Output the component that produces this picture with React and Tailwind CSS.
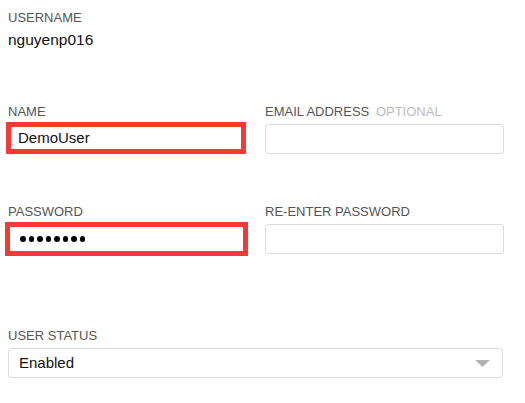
export default function App() {
  const label = "text-[13px] leading-[14px] text-[#555555] uppercase";
  const box = "h-[30px] rounded-[3px] border border-[#dcdcdc] bg-white";
  return (
    <div
      className="w-[525px] h-[403px] bg-white pl-[8px] pr-[21px] pt-[11px]"
      style={{ fontFamily: '"Liberation Sans", Arial, sans-serif' }}
    >
      <div className="flex flex-col">
        <div className={label}>Username</div>
        <div className="mt-[6px] text-[15.5px] leading-[18px] text-[#111]">nguyenp016</div>
      </div>

      <div className="mt-[56px] grid grid-cols-[238px_239px] gap-x-[19px]">
        <div className="flex flex-col">
          <div className={label}>Name</div>
          <div className="mt-[3px] ml-[-2px] w-[240px] h-[32px] border-[5px] border-[#f63a33] bg-white flex items-center pl-[7px] text-[15px] leading-[18px] text-[#111]">
            DemoUser
          </div>
        </div>
        <div className="flex flex-col">
          <div className={label}>
            Email Address <span className="ml-[3px] text-[#bdbdbd]">Optional</span>
          </div>
          <div className={"mt-[5px] " + box}></div>
        </div>
      </div>

      <div className="mt-[51px] grid grid-cols-[238px_239px] gap-x-[19px]">
        <div className="flex flex-col">
          <div className={label}>Password</div>
          <div className="mt-[3px] ml-[-3px] w-[243px] h-[34px] border-[5px] border-[#f63a33] bg-white flex items-center pl-[10px] gap-[3px]">
            {[0, 1, 2, 3, 4, 5, 6, 7].map((i) => (
              <div key={i} className="w-[5.5px] h-[5.5px] rounded-full bg-black" />
            ))}
          </div>
        </div>
        <div className="flex flex-col">
          <div className={label}>Re-enter Password</div>
          <div className={"mt-[5px] " + box}></div>
        </div>
      </div>

      <div className="mt-[73px] flex flex-col">
        <div className={label}>User Status</div>
        <div className={"mt-[5px] w-[495px] flex items-center justify-between pl-[10px] pr-[12px] " + box}>
          <span className="text-[15px] leading-[18px] text-[#111]">Enabled</span>
          <svg width="15" height="7" viewBox="0 0 15 7">
            <path d="M0 0 L15 0 L7.5 7 Z" fill="#b3b3b3" />
          </svg>
        </div>
      </div>
    </div>
  );
}
